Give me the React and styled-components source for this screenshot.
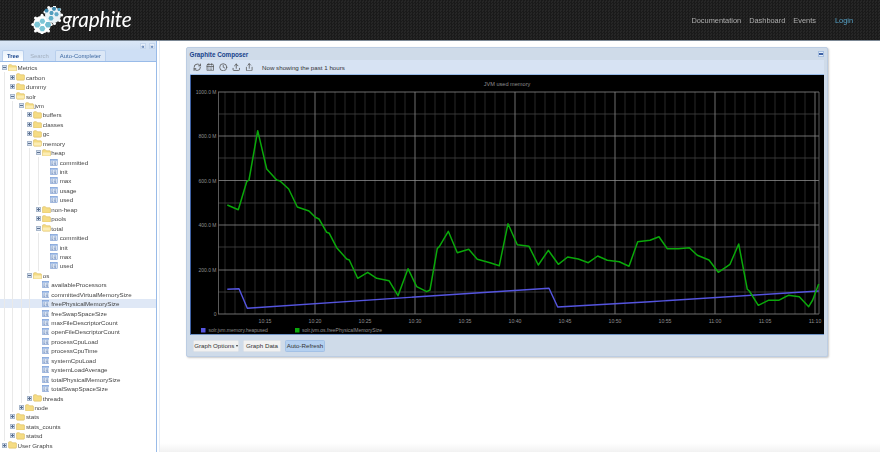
import React from 'react';
import styled, { createGlobalStyle } from 'styled-components';
import { RefreshCw, CalendarDays, Clock, Upload, Share } from 'lucide-react';

const Global = createGlobalStyle`
  html, body { margin: 0; padding: 0; background: #fff; }
  body { font-family: "Liberation Sans", Arial, sans-serif; }
`;

const Page = styled.div`
  width: 880px; height: 452px; overflow: hidden; display: flex; flex-direction: column;
  filter: blur(0.35px);
`;
const Header = styled.header`
  height: 40px; flex: none; display: flex; align-items: center; justify-content: space-between;
  background-color: #212121;
  background-image: conic-gradient(#1a1a1a 25%, #262626 0 50%, #1a1a1a 0 75%, #262626 0);
  background-size: 3px 3px;
  border-bottom: 1px solid #7b8794;
`;
const Brand = styled.div`
  display: flex; align-items: center; padding-left: 30px;
`;
const BrandName = styled.span`
  font-family: Lato, sans-serif; font-style: italic; font-size: 20.8px; color: #fff; margin-left: -6px; margin-top: -3px; letter-spacing: -.2px;
`;
const Nav = styled.nav`
  display: flex; align-items: center; padding-right: 27px; margin-top: 1px;
`;
const NavLink = styled.span`
  font-size: 7.4px; color: ${p => p.$login ? '#55a0c4' : '#adadad'}; margin-left: ${p => p.$login ? '19px' : '8px'};
`;
const Body = styled.div`
  flex: 1; display: flex; min-height: 0;
`;
const Side = styled.aside`
  width: 156px; flex: none; border-right: 1px solid #99bbe8; display: flex; flex-direction: column; background: #fff;
`;
const Tools = styled.div`
  height: 9px; flex: none; background: linear-gradient(#dbe7f6, #cfdff3); display: flex; align-items: center; justify-content: flex-end; gap: 3px; padding: 0 1px 0 0;
`;
const ToolBtn = styled.span`
  width: 6px; height: 6px; background: #e6eef9; border: 1px solid #c5d6ec; box-sizing: border-box; color: #4a70a8;
  font-size: 6px; line-height: 4px; text-align: center; font-weight: 700;
`;
const TabStrip = styled.div`
  height: 12px; flex: none; box-sizing: border-box; display: flex; align-items: flex-end; gap: 1px; padding-left: 2px; background: #cedff5; border-bottom: 1px solid #99bbe8;
`;
const Tab = styled.div`
  height: 11px; padding: 0 4px; display: flex; align-items: center; font-size: 5.9px; border-radius: 2px 2px 0 0;
  box-sizing: border-box;
  color: ${p => p.$active ? '#15428b' : p.$disabled ? '#a3afbe' : '#3f6aa3'};
  font-weight: ${p => p.$active ? 700 : 400};
  background: ${p => p.$active ? 'linear-gradient(#e8f1fb, #fff)' : p.$disabled ? 'transparent' : '#dbe7f6'};
  border: 1px solid ${p => p.$disabled ? 'transparent' : '#b9cfec'}; border-bottom: 0;
`;
const Tree = styled.div`
  flex: 1; overflow: hidden; padding-top: 1px;
`;
const Row = styled.div`
  height: 9.45px; display: flex; align-items: center; padding-left: 2px; white-space: nowrap;
  font-size: 6.2px; color: #444; background: ${p => p.$sel ? '#dfe8f6' : 'transparent'};
`;
const Indent = styled.span`
  width: 8.45px; height: 100%; flex: none;
  background: linear-gradient(#e9e9e9, #e9e9e9) no-repeat 2px 0 / 1px 100%;
`;
const Expander = styled.span`
  width: 5px; height: 5px; margin-right: 1px; flex: none; box-sizing: border-box; border: 1px solid #a9b8cc; background: #d6e0ee; position: relative;
  &::before { content: ""; position: absolute; left: 0; right: 0; top: 1px; height: 1px; background: #5a6f8f; }
  &::after { content: ""; position: absolute; top: 0; bottom: 0; left: 1px; width: 1px; background: ${p => p.$open ? 'transparent' : '#5a6f8f'}; }
`;
const Spacer = styled.span`
  width: 6px; flex: none;
`;
const Label = styled.span`
  margin-left: ${p => p.$leaf ? 2 : 0.5}px;
`;
const Icon = styled.svg`
  flex: none; display: block;
`;
const Splitter = styled.div`
  width: 3px; flex: none; border-right: 1px solid #e6edf6; box-sizing: border-box;
`;
const Main = styled.main`
  flex: 1; padding: 6px 0 0 26px;
  background: linear-gradient(#fff 402px, #f2f2f2);
`;
const Win = styled.section`
  width: 642px; height: 310px; box-sizing: border-box; background: #cfdbe9; border: 1px solid #bccde3; border-radius: 2px;
  box-shadow: 1px 1px 2px rgba(0,0,0,.22); display: flex; flex-direction: column;
`;
const WinTitle = styled.div`
  height: 12px; flex: none; padding: 0 3px 0 2.5px; display: flex; align-items: center; justify-content: space-between;
  font-size: 6.3px; font-weight: 700; color: #15428b;
`;
const Collapse = styled.span`
  width: 6px; height: 6px; box-sizing: border-box; background: #e4edf8; border: 1px solid #a8c0e0; display: flex; align-items: center; justify-content: center;
  &::after { content: ""; display: block; width: 4px; height: 2px; background: #3f62a5; }
`;
const Toolbar = styled.div`
  height: 15px; flex: none; margin: 0 3px; display: flex; align-items: center; background: #d7e3f3; border-bottom: 1px solid #99bbe8; box-sizing: border-box; padding-left: 1px; color: #555;
`;
const Tb = styled.span`
  width: 13px; flex: none; display: flex; justify-content: center;
`;
const TbText = styled.span`
  font-size: 6.2px; color: #333; margin-left: 6px;
`;
const ChartFrame = styled.div`
  height: 260px; flex: none; margin: 0 3px; background: #000; border-left: 1px solid #3f62a5; border-bottom: 1px solid #6f93c5; box-sizing: border-box;
`;
const Chart = styled.svg`
  display: block;
`;
const Buttons = styled.div`
  display: flex; gap: 4px; padding: 4.5px 0 0 6px;
`;
const Btn = styled.div`
  height: 12px; box-sizing: border-box; display: flex; align-items: center; justify-content: center; width: ${p => p.$w}px; font-size: 6.2px; color: #333; border-radius: 1.5px;
  background: ${p => p.$on ? '#b4d0f0' : '#f1f1f1'}; border: 1px solid ${p => p.$on ? '#a3c1e6' : '#dfe3e8'};
`;
const Caret = styled.span`
  width: 0; height: 0; margin-left: 1.5px; border: 1.5px solid transparent; border-top: 2px solid #333; border-bottom: 0;
`;

const tree = [
  [0,'o','Metrics'],[1,'c','carbon'],[1,'c','dummy'],[1,'o','solr'],[2,'o','jvm'],[3,'c','buffers'],[3,'c','classes'],[3,'c','gc'],[3,'o','memory'],
  [4,'o','heap'],[5,'l','committed'],[5,'l','init'],[5,'l','max'],[5,'l','usage'],[5,'l','used'],[4,'c','non-heap'],[4,'c','pools'],[4,'o','total'],
  [5,'l','committed'],[5,'l','init'],[5,'l','max'],[5,'l','used'],[3,'o','os'],
  [4,'l','availableProcessors'],[4,'l','committedVirtualMemorySize'],[4,'l','freePhysicalMemorySize',1],[4,'l','freeSwapSpaceSize'],[4,'l','maxFileDescriptorCount'],
  [4,'l','openFileDescriptorCount'],[4,'l','processCpuLoad'],[4,'l','processCpuTime'],[4,'l','systemCpuLoad'],[4,'l','systemLoadAverage'],[4,'l','totalPhysicalMemorySize'],[4,'l','totalSwapSpaceSize'],
  [3,'c','threads'],[2,'c','node'],[1,'c','stats'],[1,'c','stats_counts'],[1,'c','statsd'],[0,'c','User Graphs'],
];

const green = [[227.3,205],[238.3,209.7],[246.7,181.7],[249,180],[257.7,130.7],[266.7,169],[276.7,180],[280,181],[288.7,189],[297.3,207],[309,211],[315.3,217.3],[319,219],[326.7,232.3],[329.3,233.3],[336.7,247.7],[346.7,259],[349.3,260],[357.7,278.3],[367.7,272.3],[376.7,278.3],[389,280.7],[398,295.7],[408,268.7],[416.7,286.7],[426.7,291.7],[430,290],[437.3,248.3],[439.3,246.7],[448.3,231.3],[457.3,252.7],[468.7,249.3],[477.3,259.3],[490,262.7],[499.3,265.7],[508,223.7],[517.3,244.7],[529,246.3],[538.3,265],[548.3,250.3],[558.3,264.3],[567.7,257],[578.3,259],[588.3,262.7],[597.7,256],[607.3,260.3],[619.3,261.7],[629,266.3],[637.7,241.7],[650,240.3],[659,236.7],[667.3,248.7],[678.3,248.7],[689.3,247.7],[697.3,255.3],[709,260],[718.3,272.3],[730,264.3],[738.7,244],[747.3,289.3],[749.3,291],[758.3,305.3],[768.3,300.3],[778.7,300.3],[788.3,295.3],[799.3,296.7],[808.7,306.7],[812.7,300],[818.7,284]];
const blue = [[227.3,289.3],[239,288.7],[247.3,308.3],[430,296],[549,288.3],[557.7,307],[650,301.7],[818.7,291]];

const OX = 191, OY = 75;
const pts = a => a.map(([x, y]) => `${(x - OX).toFixed(1)},${(y - OY).toFixed(1)}`).join(' ');

function Folder({ open }) {
  return (
    <Icon width="9" height="7.5" viewBox="0 0 16 13">
      <path d="M1 2.5 Q1 1 2.5 1 H6 L8 3 H14 Q15 3 15 4.5 V11 Q15 12.5 13.5 12.5 H2.5 Q1 12.5 1 11 Z" fill="#f5dc84" stroke="#d8b85a" strokeWidth="1" />
      {open && <path d="M1.5 6 H14.5 V11.5 H1.5 Z" fill="#fcedb4" />}
    </Icon>
  );
}
function Leaf() {
  return (
    <Icon width="7.5" height="7" viewBox="0 0 14 13">
      <rect x=".5" y=".5" width="13" height="12" fill="#e6effb" stroke="#6a90cc" />
      <rect x=".5" y=".5" width="13" height="2.5" fill="#86a9de" />
      <path d="M2.5 5.5 H6 M2.5 8 H5 M2.5 10.5 H6 M8 5.5 H11.5 M7 8 H11.5 M8 10.5 H11.5" stroke="#47689f" strokeWidth="1.1" />
    </Icon>
  );
}
function Node({ level, kind, name, sel }) {
  const lines = [];
  for (let i = 0; i < level; i++) lines.push(<Indent key={i} />);
  return (
    <Row $sel={sel}>
      {lines}
      {kind === 'l' ? <Spacer /> : <Expander $open={kind === 'o'} />}
      {kind === 'l' ? <Leaf /> : <Folder open={kind === 'o'} />}
      <Label $leaf={kind === 'l'}>{name}</Label>
    </Row>
  );
}

const hexes = [[7.3,18.7,3.3,'#7cc6d6'],[12.3,22.6,3.1,'#7cc6d6'],[12.4,15.2,2.9,'#7cc6d6'],[18,18.7,3.2,'#6fbcd0'],[21,12.3,2.6,'#5fb0c8'],[16.5,4.7,2.2,'#3f88ad'],[21.5,7,2.2,'#4f9dbd'],[24,2.8,2.2,'#3f88ad'],[26.5,8.3,2.3,'#5fa9c6'],[29,3.6,1.7,'#4f9dbd']];
function Logo() {
  const teeth = (cx, cy, r, n) => Array.from({ length: n }, (_, i) => {
    const a = (i * 2 * Math.PI) / n;
    return <circle key={i} cx={cx + r * Math.cos(a)} cy={cy + r * Math.sin(a)} r="1.5" fill="#fff" />;
  });
  return (
    <Icon width="38" height="28" viewBox="0 0 38 28">
      {teeth(12, 18.5, 9.2, 8)}
      {teeth(23, 9, 8.6, 9)}
      <circle cx="12" cy="18.5" r="8.8" fill="#fff" />
      <circle cx="23" cy="9" r="8" fill="#e9f2f6" />
      {hexes.map(([x, y, r, c], i) => {
        const d = [0,1,2,3,4,5].map(k => `${(x + r * Math.cos(k * Math.PI / 3)).toFixed(1)},${(y + r * Math.sin(k * Math.PI / 3)).toFixed(1)}`).join(' ');
        return <polygon key={i} points={d} fill={c} />;
      })}
    </Icon>
  );
}

const hMajor = [92,136,180.5,225,270,314];
const hMinor = [114,158,203,247,292];
const vAll = Array.from({ length: 60 }, (_, i) => 225 + i * 10);
const vMajor = [315,415,515,615,715,815];
const xLabels = [[265,'10:15'],[315,'10:20'],[365,'10:25'],[415,'10:30'],[465,'10:35'],[515,'10:40'],[565,'10:45'],[615,'10:50'],[665,'10:55'],[715,'11:00'],[765,'11:05'],[815,'11:10']];
const yLabels = [[92,'1000.0 M'],[136,'800.0 M'],[180.5,'600.0 M'],[225,'400.0 M'],[270,'200.0 M'],[314,'0']];

function Graph() {
  const X = x => x - OX, Y = y => y - OY;
  return (
    <Chart width="633" height="259" fontFamily="'Liberation Sans', sans-serif">
      {vAll.filter(x => !vMajor.includes(x)).map(x => <line key={x} x1={X(x)} x2={X(x)} y1={Y(92)} y2={Y(314)} stroke="#343434" strokeWidth=".8" />)}
      {hMinor.map(y => <line key={y} x1={X(218)} x2={X(819)} y1={Y(y)} y2={Y(y)} stroke="#444" strokeWidth=".8" />)}
      {hMajor.map(y => <line key={y} x1={X(218)} x2={X(819)} y1={Y(y)} y2={Y(y)} stroke="#8a8a8a" strokeWidth=".8" />)}
      {vMajor.map(x => <line key={x} x1={X(x)} x2={X(x)} y1={Y(92)} y2={Y(314)} stroke="#8a8a8a" strokeWidth=".8" />)}
      <line x1={X(218.5)} x2={X(218.5)} y1={Y(92)} y2={Y(314)} stroke="#707070" strokeWidth=".8" />
      <line x1={X(819)} x2={X(819)} y1={Y(92)} y2={Y(314)} stroke="#707070" strokeWidth=".8" />
      <text x={X(507)} y={Y(86)} textAnchor="middle" fontSize="5.6" fill="#8f8f8f">JVM used memory</text>
      {yLabels.map(([y, t]) => <text key={t} x={X(216.5)} y={Y(y + 2)} textAnchor="end" fontSize="5" fill="#8f8f8f">{t}</text>)}
      {xLabels.map(([x, t]) => <text key={t} x={X(x)} y={Y(322.5)} textAnchor="middle" fontSize="5.2" fill="#8f8f8f">{t}</text>)}
      <polyline points={pts(blue)} fill="none" stroke="#5555e0" strokeWidth="1.4" strokeLinejoin="round" />
      <polyline points={pts(green)} fill="none" stroke="#0aa80a" strokeWidth="1.5" strokeLinejoin="round" />
      <rect x={X(201)} y={Y(328)} width="4.5" height="4.5" fill="#5555e0" />
      <text x={X(208.5)} y={Y(332)} fontSize="5" fill="#8f8f8f">solr.jvm.memory.heapused</text>
      <rect x={X(295)} y={Y(328)} width="4.5" height="4.5" fill="#0aa80a" />
      <text x={X(302)} y={Y(332)} fontSize="5" fill="#8f8f8f">solr.jvm.os.freePhysicalMemorySize</text>
    </Chart>
  );
}

export default function App() {
  return (
    <Page>
      <Global />
      <Header>
        <Brand><Logo /><BrandName>graphite</BrandName></Brand>
        <Nav>
          <NavLink>Documentation</NavLink>
          <NavLink>Dashboard</NavLink>
          <NavLink>Events</NavLink>
          <NavLink $login>Login</NavLink>
        </Nav>
      </Header>
      <Body>
        <Side>
          <Tools><ToolBtn>«</ToolBtn><ToolBtn>»</ToolBtn></Tools>
          <TabStrip>
            <Tab $active>Tree</Tab>
            <Tab $disabled>Search</Tab>
            <Tab>Auto-Completer</Tab>
          </TabStrip>
          <Tree>
            {tree.map(([l, k, n, s], i) => <Node key={i} level={l} kind={k} name={n} sel={s} />)}
          </Tree>
        </Side>
        <Splitter />
        <Main>
          <Win>
            <WinTitle>Graphite Composer<Collapse /></WinTitle>
            <Toolbar>
              <Tb><RefreshCw size={8.5} strokeWidth={2.4} /></Tb>
              <Tb><CalendarDays size={8.5} strokeWidth={2.2} /></Tb>
              <Tb><Clock size={8.5} strokeWidth={2.2} /></Tb>
              <Tb><Upload size={8.5} strokeWidth={2.4} /></Tb>
              <Tb><Share size={8.5} strokeWidth={2.2} /></Tb>
              <TbText>Now showing the past 1 hours</TbText>
            </Toolbar>
            <ChartFrame><Graph /></ChartFrame>
            <Buttons>
              <Btn $w={46}>Graph Options<Caret /></Btn>
              <Btn $w={38}>Graph Data</Btn>
              <Btn $w={40} $on>Auto-Refresh</Btn>
            </Buttons>
          </Win>
        </Main>
      </Body>
    </Page>
  );
}
